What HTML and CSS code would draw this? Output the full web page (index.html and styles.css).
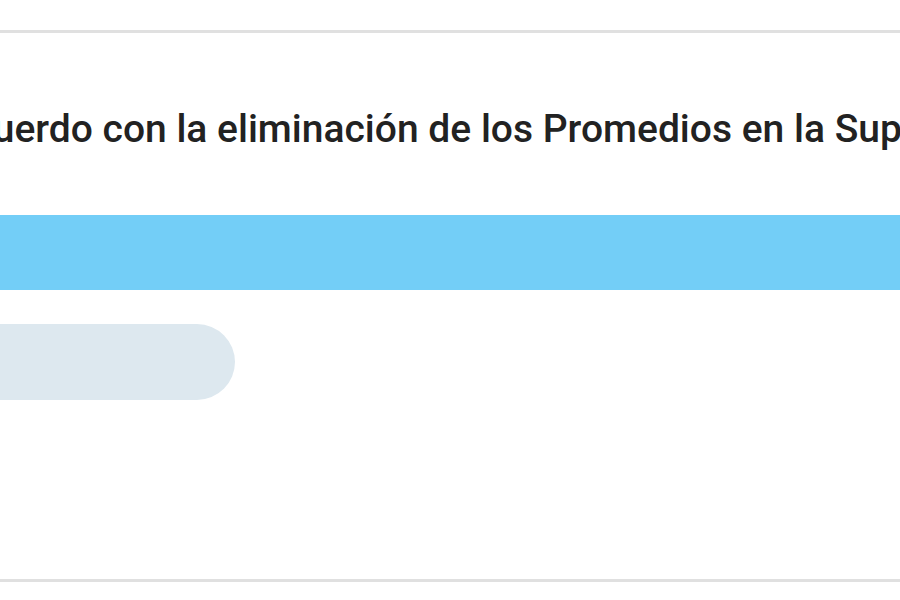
FILE: index.html
```html
<!DOCTYPE html>
<html lang="es">
<head>
  <meta charset="UTF-8" />
  <title>Encuesta</title>
  <link rel="stylesheet" href="styles.css">
</head>
<body>
  <div class="page">
    <div class="poll">
      <h2 class="question">¿Está de acuerdo con la eliminación de los Promedios en la Superintendencia?</h2>
      <div class="option option-yes"></div>
      <div class="option option-no"></div>
    </div>
  </div>
</body>
</html>
```

FILE: styles.css
```css
body {
  margin: 0;
  background-color: #fff;
  font-family: Roboto, "Liberation Sans", Arial, sans-serif;
  overflow: hidden;
}
.page {
  padding-top: 30px;
}
.poll {
  width: 1400px;
  margin-left: -226px;
  padding: 74px 20px 0;
  height: 472px;
  border-top: 3px solid #e0e0e0;
  border-bottom: 3px solid #e0e0e0;
}
.question {
  margin: 0 0 64px;
  font-size: 39px;
  line-height: 44px;
  font-weight: 500;
  color: #222;
  white-space: nowrap;
}
.option {
  height: 75px;
  margin-left: -20px;
}
.option-yes {
  background-color: #73cef7;
}
.option-no {
  width: 461px;
  height: 76px;
  margin-top: 34px;
  background-color: #dde8ef;
  border-radius: 0 38px 38px 0;
}
```
